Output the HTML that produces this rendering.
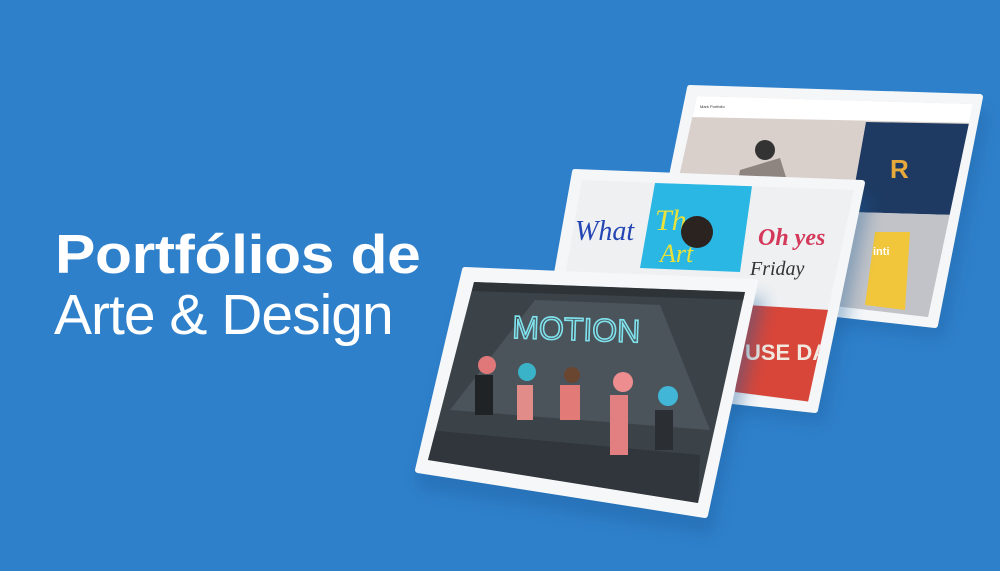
<!DOCTYPE html>
<html><head><meta charset="utf-8"><style>
html,body{margin:0;padding:0}
body{width:1000px;height:571px;background:#2f80cb;overflow:hidden;position:relative;font-family:"Liberation Sans",sans-serif}
.t1{position:absolute;left:55px;top:222px;font-size:55px;font-weight:bold;color:#fff;letter-spacing:-0.3px;white-space:nowrap;transform:scaleX(1.1);transform-origin:0 0}
.t2{position:absolute;left:54px;top:282px;font-size:57px;font-weight:normal;color:#fff;letter-spacing:-1px;white-space:nowrap}
svg{position:absolute;left:0;top:0}
</style></head><body>
<div class="t1">Portfólios de</div>
<div class="t2">Arte &amp; Design</div>
<svg width="1000" height="571" viewBox="0 0 1000 571">
<defs>
<clipPath id="cb"><polygon points="697,96 973,104 928,317 655,285"/></clipPath>
<clipPath id="cm"><polygon points="582,180 854,190 808,402 548,372"/></clipPath>
<clipPath id="cf"><polygon points="474,282 745,292 698,503 428,460"/></clipPath>
<filter id="sh"><feGaussianBlur stdDeviation="8"/></filter>
</defs>
<polygon points="700,98 990,110 945,340 650,305" fill="#1f5f9c" opacity="0.35" filter="url(#sh)"/>
<polygon points="690,88 980,97 935,325 648,293" fill="#f4f6f8" stroke="#f4f6f8" stroke-width="6" stroke-linejoin="round"/>
<g clip-path="url(#cb)">
<rect x="640" y="90" width="340" height="240" fill="#d9d0cc"/>
<polygon points="640,90 980,90 980,123 640,116" fill="#fff"/>
<polygon points="866,122 975,124 955,215 850,212" fill="#1e3a62"/>
<polygon points="850,212 955,215 930,320 830,320" fill="#c2c3c8"/>
<text x="890" y="178" font-size="26" font-weight="bold" fill="#e7a93b" font-family="Liberation Sans">R</text>
<polygon points="875,232 910,232 905,310 865,305" fill="#f1c63a"/>
<text x="873" y="255" font-size="11" font-weight="bold" fill="#fff">inti</text>
<polygon points="740,170 780,158 790,190 760,210 735,200" fill="#8e8580"/>
<circle cx="765" cy="150" r="10" fill="#333"/>
<text x="700" y="108" font-size="4" fill="#333">Mark Portfolio</text>
</g>
<polygon points="580,185 872,196 825,425 540,390" fill="#1f5f9c" opacity="0.35" filter="url(#sh)"/>
<polygon points="575,172 862,183 815,410 538,380" fill="#f4f6f8" stroke="#f4f6f8" stroke-width="6" stroke-linejoin="round"/>
<g clip-path="url(#cm)">
<rect x="540" y="175" width="320" height="235" fill="#eef0f2"/>
<polygon points="655,183 752,186 740,272 640,268" fill="#2bb7e4"/>
<text x="655" y="230" font-size="30" font-style="italic" fill="#e8e23a" font-family="Liberation Serif">The</text>
<text x="660" y="262" font-size="26" font-style="italic" fill="#e8e23a" font-family="Liberation Serif">Art</text>
<circle cx="697" cy="232" r="16" fill="#2a2320"/>
<polygon points="745,305 830,310 812,402 735,392" fill="#d8463a"/>
<text x="575" y="240" font-size="28" font-style="italic" fill="#2446b4" font-family="Liberation Serif">What</text>
<text x="758" y="245" font-size="24" font-style="italic" font-weight="bold" fill="#d4385a" font-family="Liberation Serif">Oh yes</text>
<text x="750" y="275" font-size="20" font-style="italic" fill="#333" font-family="Liberation Serif">Friday</text>
<text x="745" y="360" font-size="22" font-weight="bold" fill="#f1e8e0">USE DA</text>
</g>
<polygon points="470,285 765,298 712,535 415,488" fill="#1f5f9c" opacity="0.4" filter="url(#sh)"/>
<polygon points="465,270 755,282 705,515 418,470" fill="#f6f7f8" stroke="#f6f7f8" stroke-width="6" stroke-linejoin="round"/>
<g clip-path="url(#cf)">
<rect x="420" y="275" width="340" height="235" fill="#3b4349"/>
<polygon points="474,282 745,292 744,300 472,291" fill="#2e3338"/>
<polygon points="535,300 660,305 710,430 450,410" fill="#586167" opacity="0.6"/>
<polygon points="428,430 700,455 698,503 428,460" fill="#30363b"/>
<text x="512" y="338" font-size="32" fill="none" stroke="#7fe3ee" stroke-width="1.6" font-family="Liberation Sans" transform="rotate(2 512 338)">MOTION</text>
<rect x="475" y="375" width="18" height="40" fill="#1f2326"/><circle cx="487" cy="365" r="9" fill="#e0787a"/>
<rect x="517" y="385" width="16" height="35" fill="#e28c8a"/><circle cx="527" cy="372" r="9" fill="#3ab3c8"/>
<rect x="560" y="385" width="20" height="35" fill="#e27a78"/><circle cx="572" cy="375" r="8" fill="#6a4530"/>
<rect x="610" y="395" width="18" height="60" fill="#e27f80"/><circle cx="623" cy="382" r="10" fill="#ee8d8f"/>
<rect x="655" y="410" width="18" height="40" fill="#2b2f33"/><circle cx="668" cy="396" r="10" fill="#41b6d6"/>
</g>
</svg>
</body></html>
